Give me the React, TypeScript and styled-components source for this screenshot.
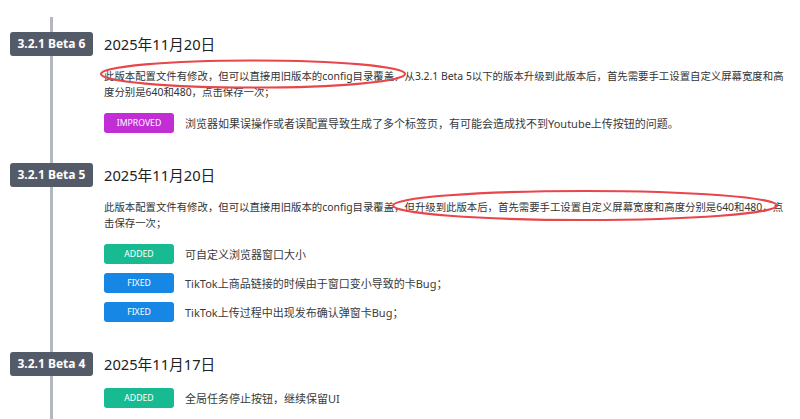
import styled, { createGlobalStyle } from "styled-components";

const GlobalStyle = createGlobalStyle`
  html, body {
    margin: 0;
    padding: 0;
    background: #ffffff;
  }
  body {
    font-family: "Noto Sans", "Noto Sans CJK SC", sans-serif;
    color: #333;
    overflow: hidden;
  }
`;

const Page = styled.div`
  position: relative;
  width: 800px;
  height: 419px;
  padding-top: 17px;
  box-sizing: border-box;
  overflow: hidden;
`;

const Timeline = styled.ol`
  position: relative;
  list-style: none;
  margin: 0;
  padding: 15px 12px 0 10px;

  &::before {
    content: "";
    position: absolute;
    left: 50px;
    top: 0;
    height: 420px;
    width: 3px;
    background: #b4b7bf;
  }
`;

const Entry = styled.li`
  position: relative;
  display: grid;
  grid-template-columns: 83px 1fr;
  column-gap: 11px;
  padding-bottom: 30px;
`;

const Version = styled.span`
  display: block;
  width: 83px;
  height: 24px;
  line-height: 24px;
  text-align: center;
  background: #545b68;
  color: #fff;
  font-size: 12px;
  font-weight: 700;
  border-radius: 3px;
`;

const Body = styled.div`
  display: flex;
  flex-direction: column;
  row-gap: 12px;
  min-width: 0;
`;

const DateTitle = styled.h2`
  margin: 0;
  height: 24px;
  line-height: 24px;
  font-size: 14.7px;
  font-weight: 400;
  color: #222;
`;

const Description = styled.p`
  margin: 0 0 1px;
  font-size: 10.4px;
  line-height: 16px;
  color: #333;
`;

const Changes = styled.ul`
  list-style: none;
  margin: 0;
  padding: 0;
  display: flex;
  flex-direction: column;
  row-gap: 9px;
`;

const Change = styled.li`
  display: flex;
  align-items: center;
  column-gap: 11px;
  font-size: 11px;
  color: #3a3a3a;
`;

type Kind = "IMPROVED" | "ADDED" | "FIXED";

const tagColors: Record<Kind, string> = {
  IMPROVED: "#c22dd6",
  ADDED: "#18bb91",
  FIXED: "#1787e5",
};

const Tag = styled.span<{ $kind: Kind }>`
  flex-shrink: 0;
  width: 70px;
  height: 20px;
  line-height: 20px;
  text-align: center;
  font-size: 8.7px;
  color: #fff;
  border-radius: 3px;
  background: ${(p) => tagColors[p.$kind]};
`;

const Marks = styled.svg`
  position: absolute;
  left: 0;
  top: 0;
  width: 800px;
  height: 419px;
  pointer-events: none;
`;

type Release = {
  version: string;
  date: string;
  note?: string;
  changes: { kind: Kind; text: string }[];
};

const releases: Release[] = [
  {
    version: "3.2.1 Beta 6",
    date: "2025年11月20日",
    note: "此版本配置文件有修改，但可以直接用旧版本的config目录覆盖，从3.2.1 Beta 5以下的版本升级到此版本后，首先需要手工设置自定义屏幕宽度和高度分别是640和480，点击保存一次；",
    changes: [
      {
        kind: "IMPROVED",
        text: "浏览器如果误操作或者误配置导致生成了多个标签页，有可能会造成找不到Youtube上传按钮的问题。",
      },
    ],
  },
  {
    version: "3.2.1 Beta 5",
    date: "2025年11月20日",
    note: "此版本配置文件有修改，但可以直接用旧版本的config目录覆盖，但升级到此版本后，首先需要手工设置自定义屏幕宽度和高度分别是640和480，点击保存一次；",
    changes: [
      { kind: "ADDED", text: "可自定义浏览器窗口大小" },
      { kind: "FIXED", text: "TikTok上商品链接的时候由于窗口变小导致的卡Bug；" },
      { kind: "FIXED", text: "TikTok上传过程中出现发布确认弹窗卡Bug；" },
    ],
  },
  {
    version: "3.2.1 Beta 4",
    date: "2025年11月17日",
    changes: [{ kind: "ADDED", text: "全局任务停止按钮，继续保留UI" }],
  },
];

export default function App() {
  return (
    <Page>
      <GlobalStyle />
      <Timeline>
        {releases.map((r) => (
          <Entry key={r.version}>
            <Version>{r.version}</Version>
            <Body>
              <DateTitle>{r.date}</DateTitle>
              {r.note && <Description>{r.note}</Description>}
              <Changes>
                {r.changes.map((c, i) => (
                  <Change key={i}>
                    <Tag $kind={c.kind}>{c.kind}</Tag>
                    <span>{c.text}</span>
                  </Change>
                ))}
              </Changes>
            </Body>
          </Entry>
        ))}
      </Timeline>
      <Marks viewBox="0 0 800 419">
        <ellipse cx="253" cy="74" rx="152" ry="13.5" fill="none" stroke="#e8464b" strokeWidth="2.2" />
        <ellipse cx="585" cy="205.5" rx="192" ry="14.5" fill="none" stroke="#e8464b" strokeWidth="2.2" />
      </Marks>
    </Page>
  );
}
